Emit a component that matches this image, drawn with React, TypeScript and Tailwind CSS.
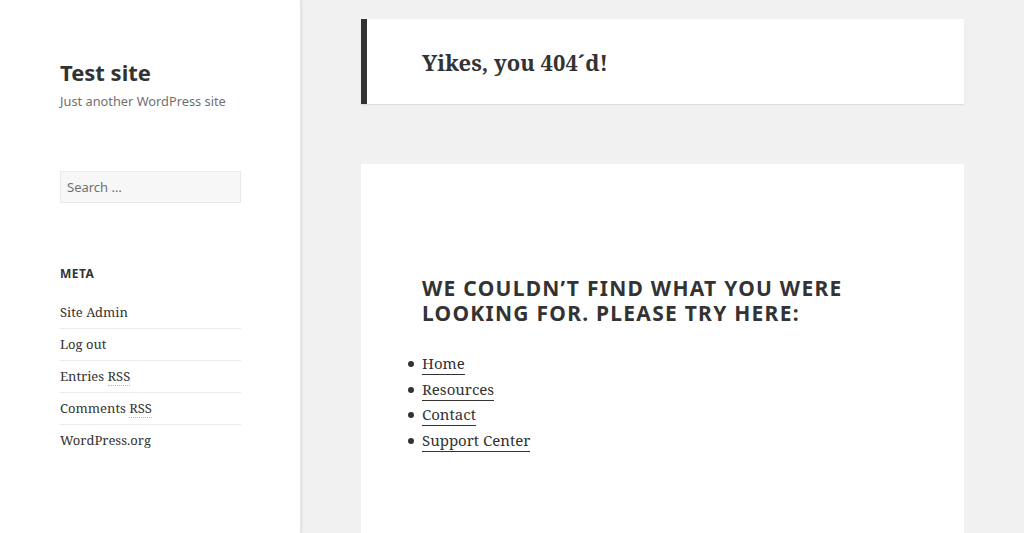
const metaLinks = [
  { label: "Site Admin" },
  { label: "Log out" },
  { label: "Entries RSS", abbr: "RSS", pre: "Entries " },
  { label: "Comments RSS", abbr: "RSS", pre: "Comments " },
  { label: "WordPress.org" },
];

const helpLinks = ["Home", "Resources", "Contact", "Support Center"];

const serif = "font-['Noto_Serif','DejaVu_Serif',serif]";
const sans = "font-['Noto_Sans','Open_Sans',sans-serif]";

function Sidebar() {
  return (
    <aside className="w-[301px] shrink-0 bg-white border-r border-[#e6e6e6] shadow-[1px_0_2px_rgba(0,0,0,0.08)] px-[60px] pt-[57px]">
      <h1 className={`${sans} text-[22px] leading-[30px] font-bold text-[#333]`}>Test site</h1>
      <p className={`${sans} text-[12.8px] leading-[18px] text-[#707070] mt-[5px]`}>Just another WordPress site</p>

      <div className="mt-[61px]">
        <input
          type="search"
          placeholder="Search …"
          className={`${sans} w-[181px] h-[32px] bg-[#f7f7f7] border border-[#eaeaea] px-[6px] text-[13px] text-[#707070] placeholder:text-[#707070] outline-none`}
        />
      </div>

      <h2 className={`${sans} mt-[63px] text-[12px] leading-[16px] font-bold tracking-[0.04em] uppercase text-[#333]`}>Meta</h2>
      <ul className={`${serif} mt-[15px] w-[181px] text-[13px] text-[#333]`}>
        {metaLinks.map((l, i) => (
          <li
            key={l.label}
            className={`py-[6px] leading-[19px] ${i < metaLinks.length - 1 ? "border-b border-[#eaeaea]" : ""}`}
          >
            {l.abbr ? (
              <>
                {l.pre}
                <span className="border-b border-dotted border-[#bbb]">{l.abbr}</span>
              </>
            ) : (
              l.label
            )}
          </li>
        ))}
      </ul>
    </aside>
  );
}

export default function App() {
  return (
    <div className="flex h-[533px] overflow-hidden bg-[#f1f1f1]">
      <Sidebar />
      <main className="flex-1 pl-[60px] pr-[60px] pt-[19px]">
        <header className="bg-white border-l-[6px] border-[#333] shadow-[0_1px_1px_rgba(0,0,0,0.08)] h-[85px] pl-[55px] flex items-center">
          <h1 className={`${serif} text-[22px] font-bold text-[#333] mt-[2px]`}>Yikes, you 404´d!</h1>
        </header>

        <section className="mt-[60px] bg-white h-[400px] pl-[61px] pr-[40px] pt-[112px]">
          <h2 className={`${sans} text-[21px] leading-[25px] font-bold uppercase tracking-[0.06em] text-[#333]`}>
            We couldn’t find what you were looking for. Please try here:
          </h2>
          <ul className={`${serif} mt-[25px] list-none pl-0 ml-0 text-[15px] text-[#333]`}>
            {helpLinks.map((h) => (
              <li key={h} className="leading-[25.5px] relative">
                <span className="absolute left-[-14px] top-[10px] w-[6px] h-[6px] rounded-full bg-[#333]" />
                <a href="#" className="border-b border-[#333] pb-[1px]">{h}</a>
              </li>
            ))}
          </ul>
        </section>
      </main>
    </div>
  );
}
